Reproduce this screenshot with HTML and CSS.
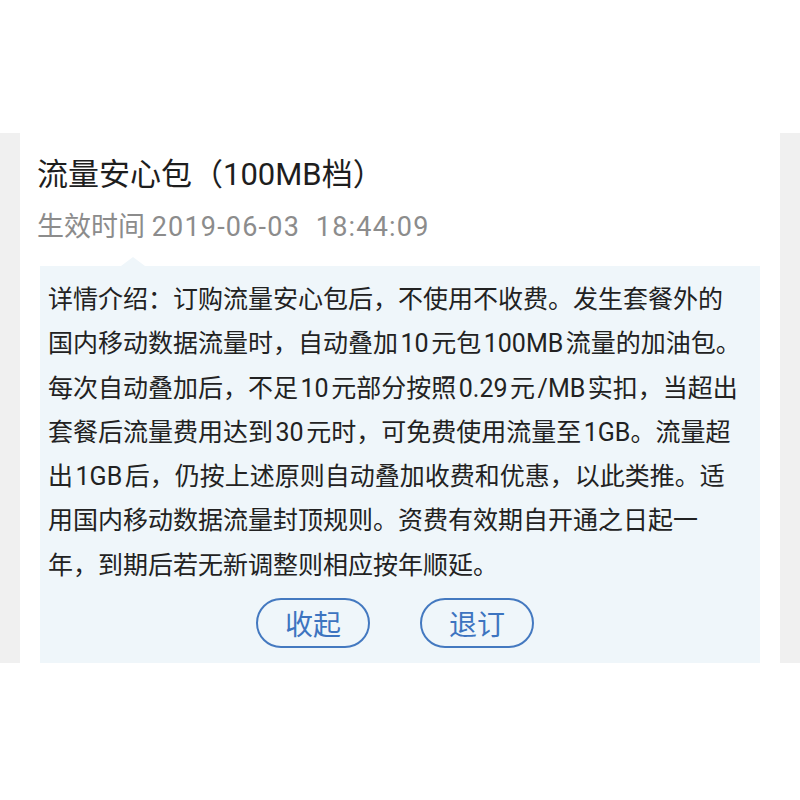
FILE: index.html
```html
<!DOCTYPE html>
<html lang="zh-CN">
<head>
  <meta charset="UTF-8">
  <title>流量安心包</title>
  <meta name="viewport" content="width=device-width, initial-scale=1.0">
  <link rel="stylesheet" href="styles.css">
</head>
<body>

<div class="screen">
  <div class="card">
    <h1 class="title">流量安心包（100MB档）</h1>
    <p class="date">生效时间 <span class="num">2019-06-03&nbsp;&nbsp;18:44:09</span></p>

    <div class="detail">
      <p class="desc">
        详情介绍：订购流量安心包后，不使用不收费。发生套餐外的<br>
        国内移动数据流量时，自动叠加&#8202;10&#8202;元包&#8202;100MB&#8202;流量的加油包。<br>
        每次自动叠加后，不足&#8202;10&#8202;元部分按照&#8202;0.29&#8202;元&#8202;/MB&#8202;实扣，当超出<br>
        套餐后流量费用达到&#8202;30&#8202;元时，可免费使用流量至&#8202;1GB。流量超<br>
        出&#8202;1GB&#8202;后，仍按上述原则自动叠加收费和优惠，以此类推。适<br>
        用国内移动数据流量封顶规则。资费有效期自开通之日起一<br>
        年，到期后若无新调整则相应按年顺延。
      </p>
      <div class="actions">
        <button class="pill">收起</button>
        <button class="pill">退订</button>
      </div>
    </div>
  </div>
</div>

</body>
</html>
```

FILE: styles.css
```css
body {
  margin: 0;
  background: #fff;
  font-family: Roboto, "Noto Sans CJK SC", sans-serif;
  color: #222;
}
.screen {
  margin-top: 133px;
  background: #f0f0f0;
  padding: 0 20px;
}
.card {
  background: #fff;
  padding: 22px 20px 0;
}
.title {
  margin: 0 0 0 -3px;
  font-size: 31px;
  font-weight: normal;
  line-height: 40px;
  color: #1e1e1e;
}
.date {
  margin: 14px 0 0 -3px;
  font-size: 27px;
  line-height: 36px;
  color: #8c8c8c;
}
.date .num {
  letter-spacing: 1.2px;
}
.detail {
  position: relative;
  margin-top: 21px;
  background: #eff6fa;
  padding: 12px 8px 15px;
}
/* little arrow pointing up at the date */
.detail::before {
  content: "";
  position: absolute;
  top: -9px;
  left: 81px;
  border-left: 12px solid transparent;
  border-right: 12px solid transparent;
  border-bottom: 9px solid #eff6fa;
}
.desc {
  margin: 0;
  font-size: 25px;
  line-height: 44.3px;
  color: #222;
  white-space: nowrap;
}
.actions {
  display: flex;
  justify-content: center;
  gap: 50px;
  margin-top: 10px;
  padding-right: 10px;
}
.pill {
  width: 114px;
  height: 50px;
  border: 2px solid #4479c0;
  border-radius: 25px;
  background: transparent;
  color: #3d74c0;
  font-family: "Noto Sans CJK SC", sans-serif;
  font-size: 28px;
  padding: 0;
}
```
